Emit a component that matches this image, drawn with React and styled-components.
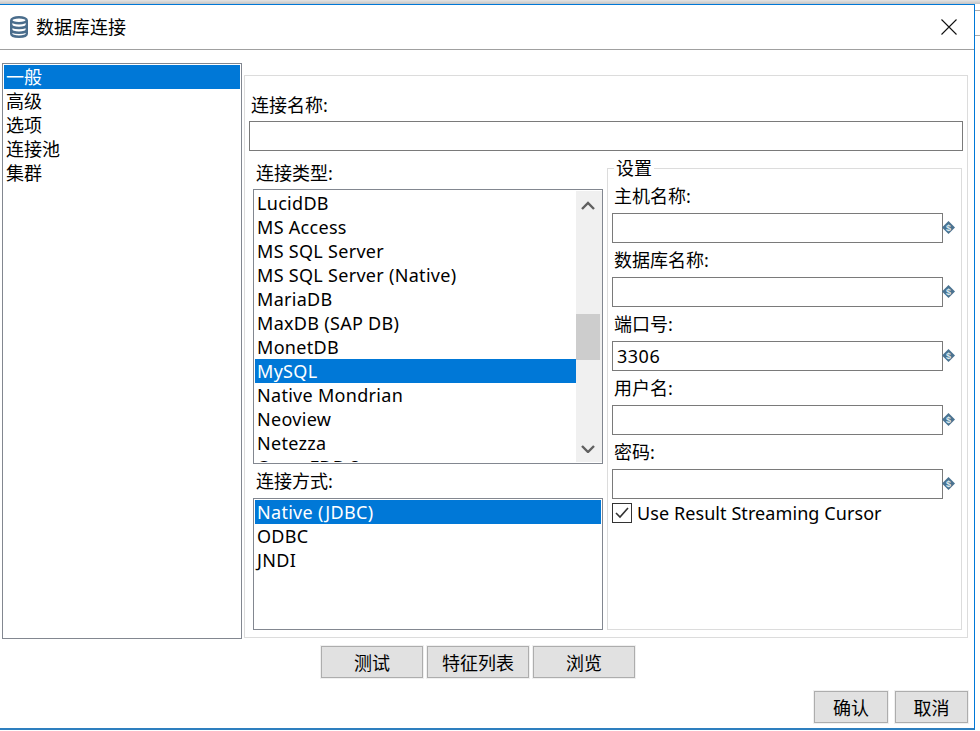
import React from "react";
import styled, { createGlobalStyle } from "styled-components";

const GlobalStyle = createGlobalStyle`
  html, body {
    margin: 0;
    padding: 0;
    background: #fff;
  }
  * {
    box-sizing: border-box;
  }
`;

const Page = styled.div`
  width: 980px;
  height: 731px;
  overflow: hidden;
  display: flex;
  flex-direction: column;
  background: #fff;
  color: #000;
  font-family: "Noto Sans", "Noto Sans CJK SC", sans-serif;
  font-size: 18px;
`;

const TopShade = styled.div`
  height: 4px;
  flex-shrink: 0;
  background: linear-gradient(#e4e4e4, #c4c4c4);
`;

const Desktop = styled.div`
  display: flex;
  height: 726px;
`;

const Dialog = styled.div`
  width: 975px;
  height: 100%;
  display: flex;
  flex-direction: column;
  background: #fff;
  border-top: 1px solid #0078d7;
  border-right: 1px solid #0078d7;
  border-bottom: 2px solid #2e7fbf;
`;

const BehindWindow = styled.div`
  flex: 1;
  height: 26px;
  margin-top: 6px;
  border-top: 1px solid #aaa;
  border-bottom: 1px solid #aaa;
`;

const TitleBar = styled.div`
  height: 45px;
  flex-shrink: 0;
  display: flex;
  align-items: center;
  padding: 0 17px 0 10px;
  border-bottom: 1px solid #a0a0a0;
`;

const Title = styled.span`
  flex: 1;
  margin-left: 8px;
  line-height: 24px;
`;

const Body = styled.div`
  flex: 1;
  display: flex;
  padding: 13px 6px 0 2px;
  gap: 2px;
`;

const SideList = styled.div`
  width: 240px;
  height: 576px;
  flex-shrink: 0;
  padding: 1px;
  border: 1px solid #828790;
`;

const Row = styled.div`
  height: 24px;
  line-height: 24px;
  padding-left: 2px;
  white-space: nowrap;
  background: ${(p) => (p.$selected ? "#0078d7" : "transparent")};
  color: ${(p) => (p.$selected ? "#fff" : "#000")};
`;

const Main = styled.div`
  flex: 1;
  min-width: 0;
  display: flex;
  flex-direction: column;
`;

const Panel = styled.div`
  height: 563px;
  margin-top: 12px;
  padding: 19px 4px 0 4px;
  border: 1px solid #dcdcdc;
`;

const NameLabel = styled.div`
  height: 26px;
  line-height: 20px;
  padding-left: 2px;
`;

const TextBox = styled.div`
  height: 30px;
  line-height: 28px;
  padding-left: 4px;
  letter-spacing: 0.5px;
  border: 1px solid #7a7a7a;
  background: #fff;
`;

const Columns = styled.div`
  display: flex;
  gap: 4px;
  margin: 7px -2px 0 4px;
`;

const LeftColumn = styled.div`
  width: 350px;
  flex-shrink: 0;
`;

const ColumnLabel = styled.div`
  height: ${(p) => p.$height}px;
  line-height: 22px;
  padding: ${(p) => p.$top}px 0 0 3px;
`;

const ListBox = styled.div`
  height: ${(p) => p.$height}px;
  display: flex;
  padding: 1px;
  overflow: hidden;
  border: 1px solid #828790;
`;

const ListRows = styled.div`
  flex: 1;
  min-width: 0;
  overflow: hidden;
  letter-spacing: 0.3px;
`;

const ScrollBar = styled.div`
  width: 26px;
  margin-right: -1px;
  padding-right: 2px;
  display: flex;
  flex-direction: column;
  align-items: stretch;
  background: #f0f0f0;
`;

const ScrollArrow = styled.div`
  height: 28px;
  display: flex;
  align-items: center;
  justify-content: center;
`;

const ScrollTrack = styled.div`
  flex: 1;
  padding-top: 95px;
`;

const ScrollThumb = styled.div`
  height: 46px;
  background: #cdcdcd;
`;

const Fieldset = styled.fieldset`
  width: 355px;
  height: 472px;
  margin: 0;
  padding: 0 0 0 4px;
  border: 1px solid #dcdcdc;
`;

const Legend = styled.legend`
  margin: 0 0 1px 2px;
  padding: 0 2px;
  line-height: 20px;
  font-size: 18px;
`;

const FieldLabel = styled.div`
  height: 34px;
  padding: 6px 0 0 2px;
  line-height: 22px;
`;

const FieldRow = styled.div`
  display: flex;
  align-items: center;
`;

const FieldBox = styled(TextBox)`
  width: 331px;
  flex-shrink: 0;
`;

const VariableMark = styled.svg`
  flex-shrink: 0;
  margin: -2px 0 0 -1px;
`;

const CheckRow = styled.label`
  display: flex;
  align-items: center;
  gap: 5px;
  height: 24px;
  margin-top: 2px;
  letter-spacing: 0.08px;
`;

const CheckBox = styled.span`
  width: 20px;
  height: 20px;
  display: flex;
  align-items: center;
  justify-content: center;
  border: 1px solid #333;
  background: #fff;
`;

const ActionRow = styled.div`
  display: flex;
  gap: 4px;
  margin: 8px 0 0 77px;
`;

const FooterRow = styled.div`
  display: flex;
  justify-content: flex-end;
  gap: 7px;
  margin-top: 13px;
`;

const Button = styled.button`
  width: ${(p) => p.$width}px;
  height: 32px;
  padding: 0;
  font: inherit;
  color: #000;
  background: #e1e1e1;
  border: 1px solid #adadad;
  border-radius: 0;
  outline: 1px solid #f0f0f0;
`;

const sideItems = ["一般", "高级", "选项", "连接池", "集群"];
const dbTypes = [
  "LucidDB",
  "MS Access",
  "MS SQL Server",
  "MS SQL Server (Native)",
  "MariaDB",
  "MaxDB (SAP DB)",
  "MonetDB",
  "MySQL",
  "Native Mondrian",
  "Neoview",
  "Netezza",
  "Open FDB 8",
];
const accessTypes = ["Native (JDBC)", "ODBC", "JNDI"];
const fields = [
  { label: "主机名称:", value: "" },
  { label: "数据库名称:", value: "" },
  { label: "端口号:", value: "3306" },
  { label: "用户名:", value: "" },
  { label: "密码:", value: "" },
];

function DatabaseIcon() {
  return (
    <svg width="18" height="22" viewBox="0 0 18 22" fill="none" stroke="#4a6d8c" strokeWidth="2.400">
      <ellipse cx="9" cy="4.200" rx="7.800" ry="3" />
      <path d="M1.200 4.200v13.600c0 1.700 3.500 3 7.800 3s7.800-1.300 7.800-3V4.200" />
      <path d="M1.200 9c0 1.700 3.500 3 7.800 3s7.800-1.300 7.800-3" />
      <path d="M1.200 13.800c0 1.700 3.500 3 7.800 3s7.800-1.300 7.800-3" />
    </svg>
  );
}

function CloseIcon() {
  return (
    <svg width="16" height="16" viewBox="0 0 16 16" stroke="#111" strokeWidth="1.100">
      <path d="M0.500 0.500L15.500 15.500M15.500 0.500L0.500 15.500" />
    </svg>
  );
}

function VariableIcon() {
  return (
    <VariableMark width="13" height="13" viewBox="0 0 13 13">
      <path d="M6.500 0L13 6.500L6.500 13L0 6.500Z" fill="#4a7391" />
      <text x="6.500" y="10" textAnchor="middle" fontSize="9" fontWeight="700" fill="#dfe8ee" fontFamily="Liberation Sans, sans-serif">
        $
      </text>
    </VariableMark>
  );
}

function Chevron({ up }) {
  return (
    <svg width="14" height="9" viewBox="0 0 14 9" fill="none" stroke="#606060" strokeWidth="2.400">
      <path d={up ? "M1 8L7 2L13 8" : "M1 2L7 8L13 2"} />
    </svg>
  );
}

export default function App() {
  return (
    <Page>
      <GlobalStyle />
      <TopShade />
      <Desktop>
        <Dialog>
          <TitleBar>
            <DatabaseIcon />
            <Title>数据库连接</Title>
            <CloseIcon />
          </TitleBar>
          <Body>
            <SideList>
              {sideItems.map((item, i) => (
                <Row key={item} $selected={i === 0}>
                  {item}
                </Row>
              ))}
            </SideList>
            <Main>
              <Panel>
                <NameLabel>连接名称:</NameLabel>
                <TextBox />
                <Columns>
                  <LeftColumn>
                    <ColumnLabel $height={31} $top={4}>
                      连接类型:
                    </ColumnLabel>
                    <ListBox $height={275}>
                      <ListRows>
                        {dbTypes.map((name) => (
                          <Row key={name} $selected={name === "MySQL"}>
                            {name}
                          </Row>
                        ))}
                      </ListRows>
                      <ScrollBar>
                        <ScrollArrow>
                          <Chevron up />
                        </ScrollArrow>
                        <ScrollTrack>
                          <ScrollThumb />
                        </ScrollTrack>
                        <ScrollArrow>
                          <Chevron />
                        </ScrollArrow>
                      </ScrollBar>
                    </ListBox>
                    <ColumnLabel $height={34} $top={6}>
                      连接方式:
                    </ColumnLabel>
                    <ListBox $height={132}>
                      <ListRows>
                        {accessTypes.map((name, i) => (
                          <Row key={name} $selected={i === 0}>
                            {name}
                          </Row>
                        ))}
                      </ListRows>
                    </ListBox>
                  </LeftColumn>
                  <Fieldset>
                    <Legend>设置</Legend>
                    {fields.map((field) => (
                      <div key={field.label}>
                        <FieldLabel>{field.label}</FieldLabel>
                        <FieldRow>
                          <FieldBox>{field.value}</FieldBox>
                          <VariableIcon />
                        </FieldRow>
                      </div>
                    ))}
                    <CheckRow>
                      <CheckBox>
                        <svg width="14" height="12" viewBox="0 0 14 12" fill="none" stroke="#333" strokeWidth="1.600">
                          <path d="M1 6L5 10L13 1" />
                        </svg>
                      </CheckBox>
                      Use Result Streaming Cursor
                    </CheckRow>
                  </Fieldset>
                </Columns>
              </Panel>
              <ActionRow>
                <Button $width={102}>测试</Button>
                <Button $width={102}>特征列表</Button>
                <Button $width={102}>浏览</Button>
              </ActionRow>
              <FooterRow>
                <Button $width={74}>确认</Button>
                <Button $width={73}>取消</Button>
              </FooterRow>
            </Main>
          </Body>
        </Dialog>
        <BehindWindow />
      </Desktop>
    </Page>
  );
}
